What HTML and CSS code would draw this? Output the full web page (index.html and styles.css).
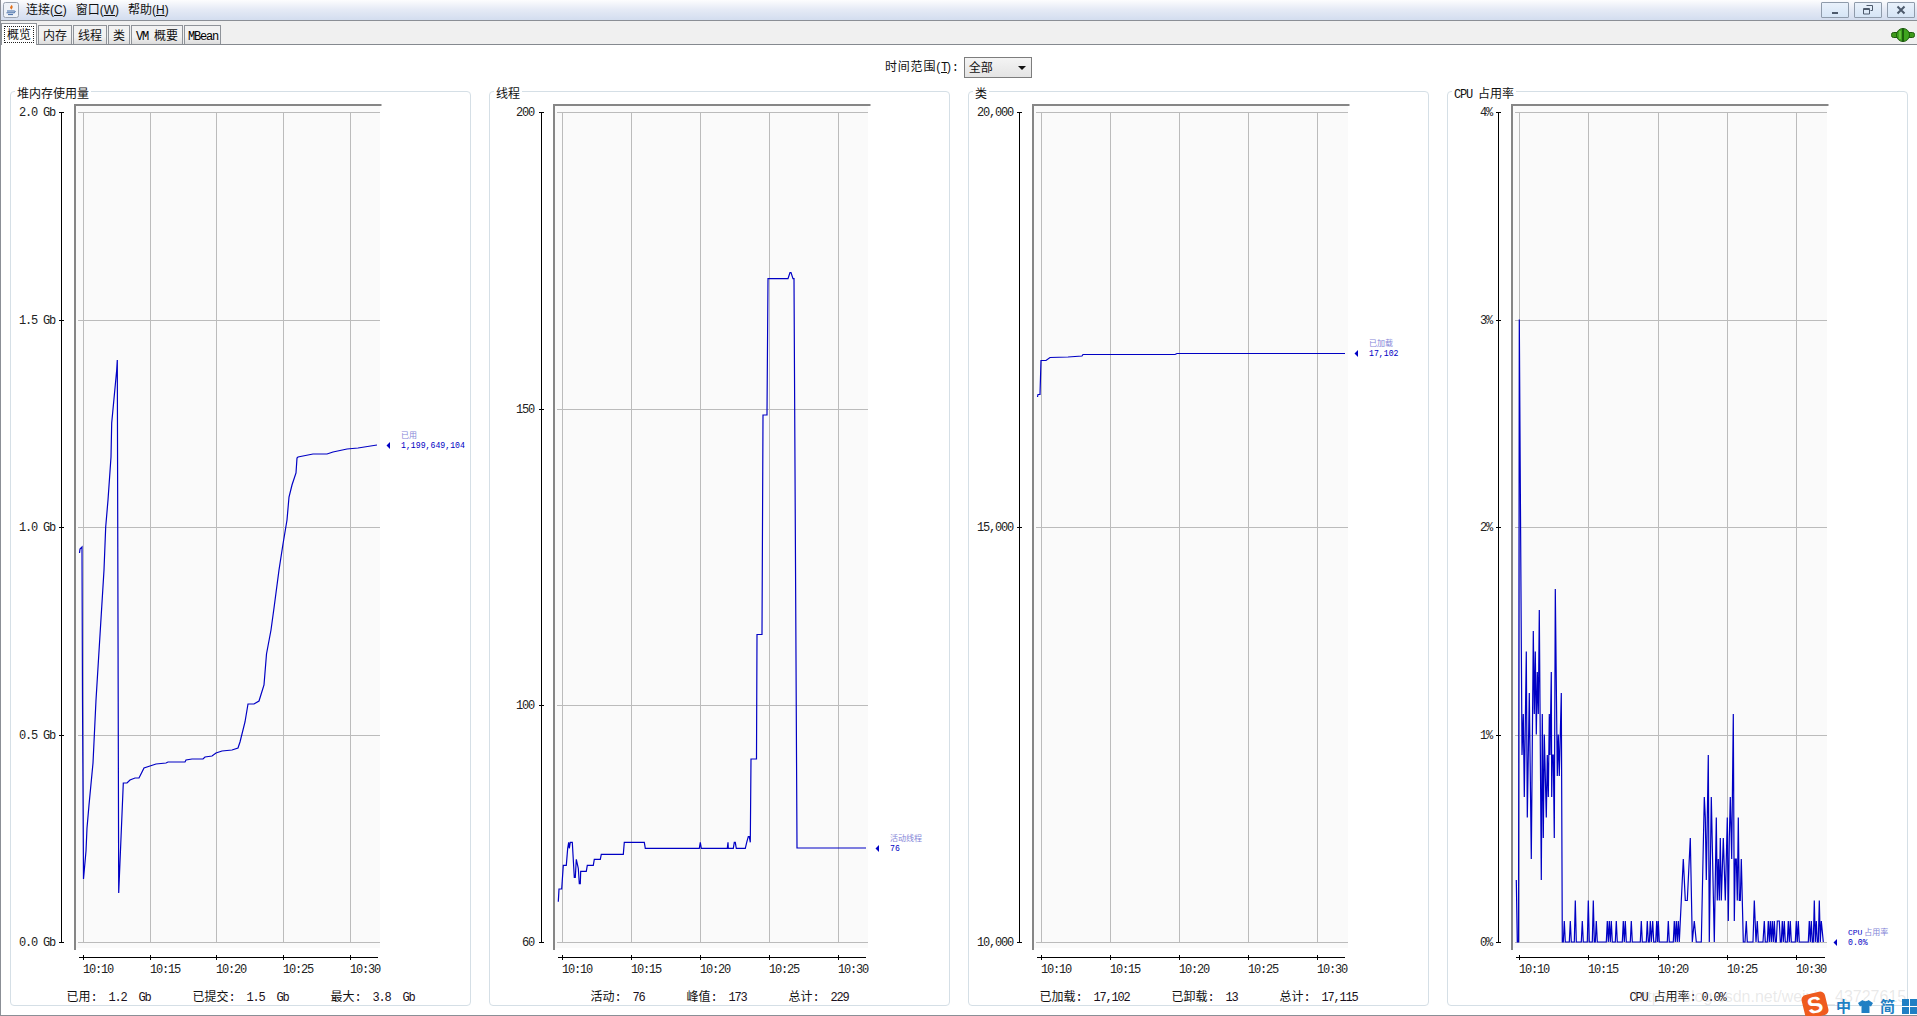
FILE: index.html
```html
<!DOCTYPE html>
<html lang="zh">
<head>
<meta charset="utf-8">
<title>JConsole</title>
<link rel="stylesheet" href="styles.css">
</head>
<body>
<div class="window">
  <header class="titlebar">
    <svg class="app-icon" width="16" height="16" viewBox="0 0 16 16">
      <rect x="0.5" y="0.5" width="15" height="15" rx="2" fill="#eef2f8" stroke="#9aa3b0"/>
      <path d="M8 2c1.5 1.5-1.5 2.500-.8 4 .3.7 1 1 1.200 1.700C9.500 6 10.200 5 9.300 3.800 8.900 3.200 8.400 2.600 8 2z" fill="#e2701c"/>
      <path d="M4 9h7M3.500 10.800h8M5 12.600h5" stroke="#3f6aa6" stroke-width="1" fill="none"/>
      <path d="M11 9c1.500-.3 1.800 1.200.2 1.500" stroke="#3f6aa6" fill="none"/>
    </svg>
    <nav class="menu">
      <span class="menu-item">连接(<u>C</u>)</span>
      <span class="menu-item">窗口(<u>W</u>)</span>
      <span class="menu-item">帮助(<u>H</u>)</span>
    </nav>
    <div class="win-buttons">
      <button class="win-btn"><svg width="10" height="10" viewBox="0 0 10 10"><rect x="2" y="7" width="6" height="2" fill="#4d5a6c"/></svg></button>
      <button class="win-btn"><svg width="10" height="10" viewBox="0 0 10 10"><path d="M3.500 .5h6v5h-2M.5 3.500h6v5.500h-6zM.5 4.500h6" fill="none" stroke="#4d5a6c"/></svg></button>
      <button class="win-btn"><svg width="10" height="10" viewBox="0 0 10 10"><path d="M1.500 1.500l7 7M8.500 1.500l-7 7" stroke="#4d5a6c" stroke-width="2" fill="none"/></svg></button>
    </div>
  </header>

  <div class="tabstrip">
    <div class="tab tab-active"><span class="focus">概览</span></div>
    <div class="tab">内存</div>
    <div class="tab">线程</div>
    <div class="tab">类</div>
    <div class="tab"><span class="mono tab-latin">VM </span>概要</div>
    <div class="tab tab-narrow"><span class="mono tab-latin">MBean</span></div>
    <svg class="plug" width="24" height="14" viewBox="0 0 24 14">
      <rect x="0.500" y="4.500" width="23" height="5" rx="2" fill="#3f9a1c" stroke="#1d5c0c"/>
      <ellipse cx="12" cy="7" rx="6.500" ry="6.500" fill="#3fa51f" stroke="#1d5c0c"/>
      <path d="M12 .5v13" stroke="#124a08" stroke-width="1.500"/>
      <path d="M9 3v8" stroke="#8fdc5c"/>
    </svg>
  </div>

  <main class="content">
    <div class="range-row">
      <span class="range-label">时间范围(<u class="mono">T</u>)<span class="mono">:</span></span>
      <div class="combo"><span>全部</span><i class="combo-arrow"></i></div>
    </div>

    <div class="panels">
      <section class="panel">
        <h2 class="panel-title">堆内存使用量</h2>
        <svg class="chart" width="459" height="893" viewBox="11 92 459 893">
          <rect class="plot" x="76" y="106" width="304" height="842"/>
          <path class="frame" d="M381.500 105H75V950"/>
          <path class="grid" d="M78 112.500H380M78 320.500H380M78 527.500H380M78 735.500H380M78 942.500H380M83.500 112V942M150.500 112V942M216.500 112V942M283.500 112V942M350.500 112V942"/>
          <path class="axis" d="M61.500 112V942M59 112.500H64M59 320.500H64M59 527.500H64M59 735.500H64M59 942.500H64M79 957.500H378M83.500 955V960M150.500 955V960M216.500 955V960M283.500 955V960M350.500 955V960"/>
          <text class="tick end" x="55" y="116">2.0 Gb</text>
          <text class="tick end" x="55" y="324">1.5 Gb</text>
          <text class="tick end" x="55" y="531">1.0 Gb</text>
          <text class="tick end" x="55" y="739">0.5 Gb</text>
          <text class="tick end" x="55" y="946">0.0 Gb</text>
          <text class="tick" x="83" y="973">10:10</text>
          <text class="tick" x="150" y="973">10:15</text>
          <text class="tick" x="216" y="973">10:20</text>
          <text class="tick" x="283" y="973">10:25</text>
          <text class="tick" x="350" y="973">10:30</text>
          <polyline class="line" points="79.500,553 80,549 82,547 82.500,700 83.500,879 86,851 87,828 89,805 93,763 96,700 104,570 105.700,527 108,500 111,457 111.700,423 116.700,370 117.300,360 118.700,893 123.300,783 127,783 130,780 135,778 139,778 142,772 144,768 150,766 156,764 166,763 168,762 185,762 186,760 192,759 203,759 205,757 212,756 216,753 222,751 232,750 238,748 240,742 245,722 248,704 254,704 259,701 264,685 266.500,654 271,630 274,608 279,570 283,544 287,520 289,497 292,485 296,473 297,458 298,457 313,454 327,454 333,452 347,449 358,448 377,445"/>
          <polygon class="marker" points="386.500,445.500 390,442 390,449"/>
          <text class="series-name" x="401" y="438">已用</text>
          <text class="series-val" x="401" y="448">1,199,649,104</text>
        </svg>
        <div class="stats">
          <span class="stat"><b>已用</b>:  1.2  Gb</span>
          <span class="stat"><b>已提交</b>:  1.5  Gb</span>
          <span class="stat"><b>最大</b>:  3.8  Gb</span>
        </div>
      </section>

      <section class="panel">
        <h2 class="panel-title">线程</h2>
        <svg class="chart" width="459" height="893" viewBox="490 92 459 893">
          <rect class="plot" x="555" y="106" width="313" height="842"/>
          <path class="frame" d="M870.500 105H554V950"/>
          <path class="grid" d="M557 112.500H868M557 409.500H868M557 705.500H868M557 942.500H868M562.500 112V942M631.500 112V942M700.500 112V942M769.500 112V942M838.500 112V942"/>
          <path class="axis" d="M541.500 112V942M539 112.500H544M539 409.500H544M539 705.500H544M539 942.500H544M558 957.500H866M562.500 955V960M631.500 955V960M700.500 955V960M769.500 955V960M838.500 955V960"/>
          <text class="tick end" x="534" y="116">200</text>
          <text class="tick end" x="534" y="413">150</text>
          <text class="tick end" x="534" y="709">100</text>
          <text class="tick end" x="534" y="946">60</text>
          <text class="tick" x="562" y="973">10:10</text>
          <text class="tick" x="631" y="973">10:15</text>
          <text class="tick" x="700" y="973">10:20</text>
          <text class="tick" x="769" y="973">10:25</text>
          <text class="tick" x="838" y="973">10:30</text>
          <polyline class="line" points="558.300,901.700 559,889 561.700,889 563.300,865.300 566.300,865.300 567.700,848.300 568.700,842.300 569.300,848.300 570.300,842.300 572.300,842.300 574.300,877.300 575.300,877.300 576.300,859.300 578.300,868.300 579.300,883.700 580.300,883.700 580.700,871.300 586.300,871.300 587.300,865.300 593.300,865.300 594.300,859.300 600.300,859.300 601.300,854.300 623.300,854.300 624.300,842.300 644.300,842.300 645.300,848.300 699.300,848.300 700.300,842.300 701.300,848.300 727.300,848.300 728,842.300 728.300,848.300 733.300,848.300 734.300,842.300 735.300,842.300 736.300,848.300 745.300,848.300 746.700,842.300 748.300,836.700 749.300,836.700 750.300,842.300 751,759 756.500,759 757,634.500 762,634.500 763,415 767,415 768,278.600 788,278.600 790,272.500 791,272.500 793,278.600 794,278.600 797,848 866,848"/>
          <polygon class="marker" points="875.500,848.500 879,845 879,852"/>
          <text class="series-name" x="890" y="841">活动线程</text>
          <text class="series-val" x="890" y="851">76</text>
        </svg>
        <div class="stats">
          <span class="stat"><b>活动</b>:  76</span>
          <span class="stat"><b>峰值</b>:  173</span>
          <span class="stat"><b>总计</b>:  229</span>
        </div>
      </section>

      <section class="panel">
        <h2 class="panel-title">类</h2>
        <svg class="chart" width="459" height="893" viewBox="969 92 459 893">
          <rect class="plot" x="1034" y="106" width="314" height="842"/>
          <path class="frame" d="M1349.500 105H1033V950"/>
          <path class="grid" d="M1036 112.500H1348M1036 527.500H1348M1036 942.500H1348M1041.500 112V942M1110.500 112V942M1179.500 112V942M1248.500 112V942M1317.500 112V942"/>
          <path class="axis" d="M1019.500 112V942M1017 112.500H1022M1017 527.500H1022M1017 942.500H1022M1037 957.500H1345M1041.500 955V960M1110.500 955V960M1179.500 955V960M1248.500 955V960M1317.500 955V960"/>
          <text class="tick end" x="1013" y="116">20,000</text>
          <text class="tick end" x="1013" y="531">15,000</text>
          <text class="tick end" x="1013" y="946">10,000</text>
          <text class="tick" x="1041" y="973">10:10</text>
          <text class="tick" x="1110" y="973">10:15</text>
          <text class="tick" x="1179" y="973">10:20</text>
          <text class="tick" x="1248" y="973">10:25</text>
          <text class="tick" x="1317" y="973">10:30</text>
          <polyline class="line" points="1037.500,397 1038,394.500 1040,394.500 1041,360.500 1046,360.500 1050,357.500 1068,357 1082,356 1083,354.500 1175,354.500 1177,353.500 1345,353.500"/>
          <polygon class="marker" points="1354.500,353.500 1358,350 1358,357"/>
          <text class="series-name" x="1369" y="346">已加载</text>
          <text class="series-val" x="1369" y="356">17,102</text>
        </svg>
        <div class="stats">
          <span class="stat"><b>已加载</b>:  17,102</span>
          <span class="stat"><b>已卸载</b>:  13</span>
          <span class="stat"><b>总计</b>:  17,115</span>
        </div>
      </section>

      <section class="panel">
        <h2 class="panel-title"><span class="mono">CPU </span>占用率</h2>
        <svg class="chart" width="459" height="893" viewBox="1448 92 459 893">
          <rect class="plot" x="1513" y="106" width="314" height="842"/>
          <path class="frame" d="M1828.500 105H1512V950"/>
          <path class="grid" d="M1515 112.500H1827M1515 320.500H1827M1515 527.500H1827M1515 735.500H1827M1515 942.500H1827M1519.500 112V942M1588.500 112V942M1658.500 112V942M1727.500 112V942M1796.500 112V942"/>
          <path class="axis" d="M1498.500 112V942M1496 112.500H1501M1496 320.500H1501M1496 527.500H1501M1496 735.500H1501M1496 942.500H1501M1516 957.500H1825M1519.500 955V960M1588.500 955V960M1658.500 955V960M1727.500 955V960M1796.500 955V960"/>
          <text class="tick end" x="1492" y="116">4%</text>
          <text class="tick end" x="1492" y="324">3%</text>
          <text class="tick end" x="1492" y="531">2%</text>
          <text class="tick end" x="1492" y="739">1%</text>
          <text class="tick end" x="1492" y="946">0%</text>
          <text class="tick" x="1519" y="973">10:10</text>
          <text class="tick" x="1588" y="973">10:15</text>
          <text class="tick" x="1658" y="973">10:20</text>
          <text class="tick" x="1727" y="973">10:25</text>
          <text class="tick" x="1796" y="973">10:30</text>
          <polyline class="line" points="1516.300,880 1517.300,942 1518.500,942 1519.300,319.500 1522,755 1523.300,714 1524.300,797 1526.300,651.500 1527.300,817.500 1529.300,693 1531.300,859 1533.300,631 1534.300,714 1535.300,651.500 1536.300,734.500 1537.300,672 1538.300,714 1539.300,610 1541.300,880 1542.300,714 1543.300,838 1544.300,734.500 1546.300,817.500 1547.300,755 1548.300,797 1549.300,714 1550,755 1551.300,672 1551.700,797 1552.300,755 1553.300,755 1554.300,838 1555.300,589 1557.300,776 1558.300,734.500 1559.300,776 1561.300,693 1562.300,942 1563.300,942 1564.300,921 1565.300,942 1569.300,942 1570.300,921 1571.300,942 1574.300,942 1575.300,900.500 1576.300,942 1581.300,942 1582.300,921 1583.300,942 1587.300,942 1588.300,900.500 1589.300,942 1592.300,942 1593.300,900.500 1594.300,942 1595.300,942 1596.300,921 1597.300,942 1606.300,942 1607.300,921 1608.300,942 1609.300,921 1610.300,942 1611.300,921 1612.300,942 1615.300,942 1616.300,921 1617.300,942 1622.300,942 1623.300,921 1624.300,942 1625.300,921 1626.300,942 1630.300,942 1631.300,921 1632.300,942 1640.300,942 1641.300,921 1642.300,942 1646.300,942 1647.300,921 1648.300,942 1649.300,942 1650.300,921 1651.300,942 1652.700,921 1653.700,942 1655.700,942 1656.700,921 1657.500,942 1658.300,921 1659.300,942 1667.300,942 1668.300,921 1669.300,942 1673.300,942 1674.300,921 1675.300,942 1676.300,921 1677.300,942 1678.300,921 1679.300,942 1680.300,921 1681.300,900.500 1683.300,859 1685.300,900.500 1687.300,900.500 1690.300,838 1692.300,942 1694.300,921 1696.300,942 1701.300,942 1704.300,797 1705.300,817.500 1706.300,880 1708.300,755 1709.300,942 1711.300,797 1714.300,942 1716.300,817.500 1717.300,900.500 1718.300,859 1719.300,900.500 1720.300,838 1721.300,900.500 1723.300,838 1725.300,900.500 1727.300,817.500 1728.300,921 1729.300,838 1730.300,797 1731.700,859 1733.300,714 1734.300,921 1735.300,859 1736.300,859 1737.300,900.500 1738.300,817.500 1739.300,900.500 1740.300,900.500 1741.300,859 1743.300,942 1745,942 1746.300,921 1747.300,942 1753,942 1754.300,900.500 1756,942 1757.300,921 1758.300,942 1763,942 1764.300,921 1765.300,942 1767.300,942 1768.300,921 1769.300,942 1770.300,921 1771.300,942 1772.300,921 1773.300,942 1774.300,921 1775.300,942 1776.300,942 1777.300,921 1779.300,921 1780.300,942 1781.300,942 1782.300,921 1783.300,942 1784.300,921 1785.300,942 1787.300,942 1788.300,921 1789.300,942 1790.300,921 1791.300,942 1795.300,942 1796.300,921 1797.300,942 1798.300,921 1799.300,942 1808.300,942 1809.300,921 1810.300,942 1811.300,921 1812.300,942 1813.300,942 1814.300,900.500 1815.300,942 1816.300,921 1817.300,942 1818.300,942 1819.300,900.500 1820.300,942 1821.300,921 1823.300,942"/>
          <polygon class="marker" points="1833.500,942.500 1837,939 1837,946"/>
          <text class="series-name" x="1848" y="935"><tspan class="series-strong">CPU</tspan> 占用率</text>
          <text class="series-val" x="1848" y="945">0.0%</text>
        </svg>
        <div class="stats">
          <span class="stat"><i class="mono-plain">CPU </i><b>占用率</b>: 0.0%</span>
        </div>
      </section>
    </div>
  </main>
</div>

<div class="watermark">https://blog.csdn.net/weixin_43727615</div>
<div class="ime">
  <span class="ime-logo"><span class="ime-s">S</span></span>
  <span class="ime-txt">中</span>
  <svg class="ime-shirt" width="15" height="15" viewBox="0 0 15 15"><path d="M4.500 1 0 4l2 3.500 1.500-.8V14h8V6.700l1.500.8L15 4l-4.500-3c-.5 1.500-5.500 1.500-6 0z" fill="#1f7fc4"/></svg>
  <span class="ime-txt">简</span>
  <svg class="ime-grid" width="15" height="15" viewBox="0 0 15 15"><path d="M0 0h7v7H0zM8 0h7v7H8zM0 8h7v7H0zM8 8h7v7H8z" fill="#1f7fc4"/></svg>
</div>
</body>
</html>
```

FILE: styles.css
```css
* { box-sizing: border-box; }

html, body {
  margin: 0;
  height: 1016px;
  overflow: hidden;
  background: #fff;
}

body {
  position: relative;
  font: 12px/14px "Liberation Sans", "Noto Sans CJK SC", sans-serif;
  color: #111;
}

.window {
  height: 1016px;
  display: flex;
  flex-direction: column;
  border-left: 1px solid #8b8f96;
  border-bottom: 1px solid #8b8f96;
}

.mono {
  font-family: "Liberation Mono", monospace;
  letter-spacing: -1.2px;
}

/* title bar */
.titlebar {
  height: 21px;
  flex: none;
  display: flex;
  align-items: center;
  padding: 0 2px 1px 2px;
  background: linear-gradient(#fdfdfe 0%, #e6ebf6 45%, #d3ddef 100%);
  border-bottom: 1px solid #8b8f96;
}

.app-icon { flex: none; }

.menu {
  display: flex;
  gap: 9px;
  margin-left: 7px;
  font-size: 12px;
}

.menu-item { white-space: nowrap; }

.win-buttons {
  margin-left: auto;
  display: flex;
  gap: 5px;
}

.win-btn {
  width: 28px;
  height: 16px;
  padding: 0;
  display: flex;
  align-items: center;
  justify-content: center;
  background: linear-gradient(#e9f1fb, #d6e5f6);
  border: 1px solid #8f9bab;
  border-radius: 1px;
}

/* tabs */
.tabstrip {
  height: 24px;
  flex: none;
  display: flex;
  align-items: flex-end;
  gap: 1px;
  padding-left: 0;
  background: #f0f0f0;
  border-bottom: 1px solid #85898f;
  position: relative;
}

.tab {
  height: 19px;
  padding: 3px 4px 0;
  background: linear-gradient(#f2f2f2, #f2f2f2 60%, #dcdcdc);
  border: 1px solid #8f9399;
  border-bottom: 0;
  line-height: 14px;
  white-space: nowrap;
  font-size: 12px;
}

.tab-narrow { padding: 3px 2px 0 3px; }

.tab-latin { color: #000; }

.tab-active {
  height: 22px;
  width: 36px;
  padding: 2px;
  background: #fff;
  margin-bottom: -1px;
  z-index: 1;
}

.focus {
  display: block;
  height: 17px;
  padding: 1px 2px 0;
  border: 1px dotted #222;
}

.plug {
  margin-left: auto;
  margin-right: 2px;
  margin-bottom: 2px;
}

/* content */
.content {
  flex: 1;
  min-height: 0;
  display: flex;
  flex-direction: column;
  padding: 0 9px 9px 9px;
  background: #fff;
}

.range-row {
  height: 46px;
  flex: none;
  display: flex;
  align-items: flex-start;
  justify-content: flex-start;
  padding: 12px 0 0 875px;
  gap: 6px;
}

.range-label {
  line-height: 21px;
  white-space: nowrap;
  letter-spacing: 0.8px;
}

.combo {
  width: 68px;
  height: 21px;
  display: flex;
  align-items: center;
  justify-content: space-between;
  padding: 0 5px 0 4px;
  border: 1px solid #7d7d7d;
  background: linear-gradient(#f4f4f4, #e4e4e4);
}

.combo-arrow {
  width: 0;
  height: 0;
  border-left: 4px solid transparent;
  border-right: 4px solid transparent;
  border-top: 4px solid #111;
}

/* panels */
.panels {
  display: grid;
  grid-template-columns: repeat(4, 461px);
  column-gap: 18px;
  height: 915px;
}

.panel {
  position: relative;
  height: 915px;
  display: flex;
  flex-direction: column;
  border: 1px solid #d5dfe6;
  border-radius: 4px;
}

.panel-title {
  position: absolute;
  top: -7px;
  left: 4px;
  margin: 0;
  padding: 0 2px 0 2px;
  background: #fff;
  font-size: 12px;
  line-height: 16px;
  font-weight: normal;
  font-family: "Noto Sans CJK SC", sans-serif;
  color: #111;
}

.chart {
  display: block;
  flex: none;
}

.plot { fill: #fafafa; }

.frame {
  fill: none;
  stroke: #868686;
  stroke-width: 2;
}

.grid {
  fill: none;
  stroke: #bbbbbb;
  stroke-width: 1;
}

.axis {
  fill: none;
  stroke: #000;
  stroke-width: 1;
}

.line {
  fill: none;
  stroke: #0000c4;
  stroke-width: 1.2;
  stroke-linejoin: miter;
  stroke-miterlimit: 3;
}

.marker { fill: #0000c4; }

.tick {
  font: 12px "Liberation Mono", monospace;
  letter-spacing: -1.2px;
  fill: #222;
}

.end { text-anchor: end; }

.series-name {
  font: 8px "Noto Sans CJK SC", sans-serif;
  fill: #8585d8;
}

.series-strong {
  font-family: "Liberation Mono", monospace;
  fill: #0000c4;
}

.series-val {
  font: 8.200px "Liberation Mono", monospace;
  fill: #0000c4;
}

.stats {
  flex: 1;
  display: flex;
  justify-content: center;
  align-items: flex-start;
  gap: 42px;
  padding-top: 4px;
  white-space: pre;
  font: 12px/14px "Liberation Mono", monospace;
  letter-spacing: -1.2px;
  color: #1a1020;
}

.stat b,
.stat {
  white-space: pre;
}

.stat b {
  font: 12px/14px "Noto Sans CJK SC", sans-serif;
  letter-spacing: 0;
  color: #111;
}

.mono-plain { font-style: normal; }

/* overlays */
.watermark {
  position: absolute;
  left: 1634px;
  top: 988px;
  font: 16px/18px "Liberation Sans", sans-serif;
  color: rgba(170, 170, 170, 0.26);
  white-space: nowrap;
}

.ime {
  position: absolute;
  left: 1803px;
  top: 992px;
  width: 114px;
  height: 24px;
  display: flex;
  align-items: center;
  gap: 0;
}

.ime-logo {
  width: 24px;
  height: 24px;
  margin: 2px 9px 0 0;
  flex: none;
  display: flex;
  align-items: center;
  justify-content: center;
  background: #ef5b1e;
  border-radius: 5px;
  transform: rotate(-14deg);
}

.ime-s {
  font: bold 23px/24px "Liberation Sans", sans-serif;
  color: #fff;
}

.ime-txt {
  font: bold 15px/18px "Noto Sans CJK SC", sans-serif;
  color: #1f7fc4;
  margin-top: 4px;
  flex: none;
}

.ime-shirt { margin: 4px 7px 0 7px; flex: none; }
.ime-grid { margin: 4px 0 0 7px; flex: none; }
```
